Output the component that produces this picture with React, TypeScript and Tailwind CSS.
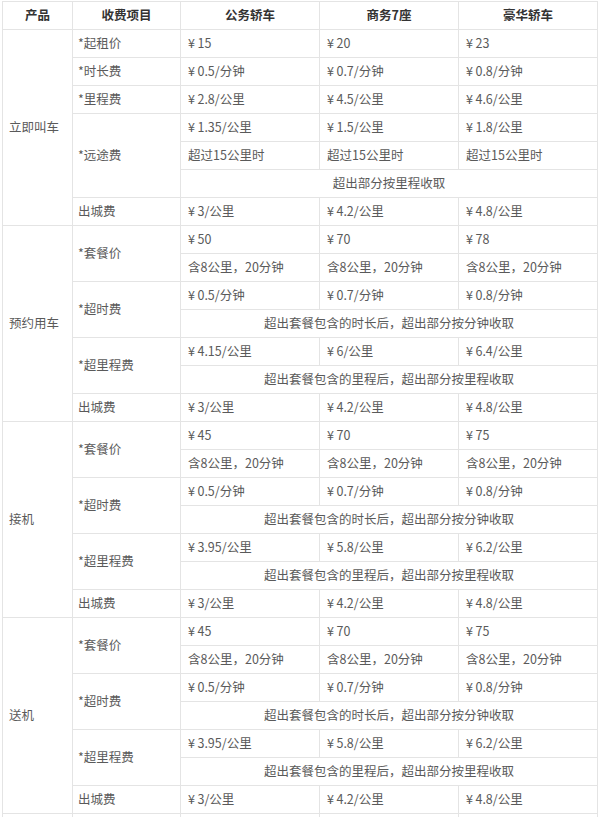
type Cell = { text: string; span?: number };

type Row = {
  label?: string;
  labelSpan?: number;
  cells: Cell[];
};

type Section = {
  name: string;
  rows: Row[];
};

const tri = (a: string, b: string, c: string): Cell[] => [{ text: a }, { text: b }, { text: c }];
const wide = (text: string): Cell[] => [{ text, span: 3 }];

const pkgSection = (name: string, base: string[], over: string[], km: string[]): Section => ({
  name,
  rows: [
    { label: "*套餐价", labelSpan: 2, cells: tri(base[0], base[1], base[2]) },
    { cells: tri("含8公里，20分钟", "含8公里，20分钟", "含8公里，20分钟") },
    { label: "*超时费", labelSpan: 2, cells: tri(over[0], over[1], over[2]) },
    { cells: wide("超出套餐包含的时长后，超出部分按分钟收取") },
    { label: "*超里程费", labelSpan: 2, cells: tri(km[0], km[1], km[2]) },
    { cells: wide("超出套餐包含的里程后，超出部分按里程收取") },
    { label: "出城费", cells: tri("¥3/公里", "¥4.2/公里", "¥4.8/公里") },
  ],
});

const sections: Section[] = [
  {
    name: "立即叫车",
    rows: [
      { label: "*起租价", cells: tri("¥15", "¥20", "¥23") },
      { label: "*时长费", cells: tri("¥0.5/分钟", "¥0.7/分钟", "¥0.8/分钟") },
      { label: "*里程费", cells: tri("¥2.8/公里", "¥4.5/公里", "¥4.6/公里") },
      { label: "*远途费", labelSpan: 3, cells: tri("¥1.35/公里", "¥1.5/公里", "¥1.8/公里") },
      { cells: tri("超过15公里时", "超过15公里时", "超过15公里时") },
      { cells: wide("超出部分按里程收取") },
      { label: "出城费", cells: tri("¥3/公里", "¥4.2/公里", "¥4.8/公里") },
    ],
  },
  pkgSection(
    "预约用车",
    ["¥50", "¥70", "¥78"],
    ["¥0.5/分钟", "¥0.7/分钟", "¥0.8/分钟"],
    ["¥4.15/公里", "¥6/公里", "¥6.4/公里"]
  ),
  pkgSection(
    "接机",
    ["¥45", "¥70", "¥75"],
    ["¥0.5/分钟", "¥0.7/分钟", "¥0.8/分钟"],
    ["¥3.95/公里", "¥5.8/公里", "¥6.2/公里"]
  ),
  pkgSection(
    "送机",
    ["¥45", "¥70", "¥75"],
    ["¥0.5/分钟", "¥0.7/分钟", "¥0.8/分钟"],
    ["¥3.95/公里", "¥5.8/公里", "¥6.2/公里"]
  ),
];

const td = "border border-[#e4e4e4] align-middle leading-none whitespace-nowrap";

// the source puts a narrow gap between the yen sign and the amount
const price = (t: string) => (t.startsWith("¥") ? "¥\u2009" + t.slice(1) : t);

export default function App() {
  return (
    <div
      className="min-h-[817px] bg-white pl-[2px] pt-[1px] text-[12.5px] text-[#5a5a5a]"
      style={{ fontFamily: '"Noto Sans CJK SC", "Noto Sans", sans-serif' }}
    >
      <table className="w-[595px] table-fixed border-collapse">
        <colgroup>
          <col className="w-[70px]" />
          <col className="w-[108px]" />
          <col className="w-[139px]" />
          <col className="w-[139px]" />
          <col className="w-[139px]" />
        </colgroup>
        <thead>
          <tr className="h-[28px]">
            {["产品", "收费项目", "公务轿车", "商务7座", "豪华轿车"].map((h) => (
              <th key={h} className={`${td} text-center font-bold text-[#333]`}>
                {h}
              </th>
            ))}
          </tr>
        </thead>
        <tbody>
          {sections.map((sec) =>
            sec.rows.map((row, i) => (
              <tr key={`${sec.name}-${i}`} className="h-[28px]">
                {i === 0 && (
                  <td rowSpan={sec.rows.length} className={`${td} pl-[6px]`}>
                    {sec.name}
                  </td>
                )}
                {row.label && (
                  <td rowSpan={row.labelSpan ?? 1} className={`${td} pl-[5px]`}>
                    {row.label}
                  </td>
                )}
                {row.cells.map((c, j) => (
                  <td
                    key={j}
                    colSpan={c.span ?? 1}
                    className={`${td} ${c.span ? "text-center" : "pl-[7px]"}`}
                  >
                    {price(c.text)}
                  </td>
                ))}
              </tr>
            ))
          )}
          <tr className="h-[28px]">
            <td className={td} />
            <td className={td} />
            <td className={td} />
            <td className={td} />
            <td className={td} />
          </tr>
        </tbody>
      </table>
    </div>
  );
}
